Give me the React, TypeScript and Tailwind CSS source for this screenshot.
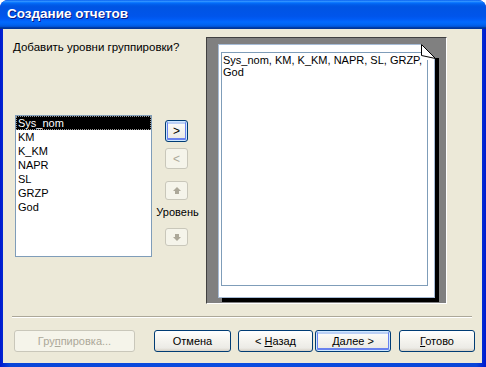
import React from "react";

const font = "font-['Liberation_Sans','Arial',sans-serif]";

function Btn({
  children,
  w,
  variant = "normal",
  className = "",
}: {
  children: React.ReactNode;
  w: string;
  variant?: "normal" | "default" | "disabled";
  className?: string;
}) {
  const base =
    "h-[22px] rounded-[3px] border flex items-center justify-center text-[11px] leading-none shrink-0";
  const v =
    variant === "disabled"
      ? "border-[#c9c7ba] bg-[#f5f4ea] text-[#aca899]"
      : variant === "default"
      ? "border-[#003c74] text-black bg-[linear-gradient(180deg,#ffffff_0%,#f6f5f0_40%,#ecebe6_85%,#d6d0c5_100%)] shadow-[inset_0_0_0_1px_#cee7ff,inset_0_-1px_0_2px_#6982ee,inset_0_1px_0_2px_#bbd0f5]"
      : "border-[#003c74] text-black bg-[linear-gradient(180deg,#ffffff_0%,#f6f5f0_40%,#ecebe6_85%,#d6d0c5_100%)]";
  return <div className={`${base} ${v} ${w} ${className}`}>{children}</div>;
}

function SmallBtn({
  children,
  disabled,
  h,
  mt,
}: {
  children: React.ReactNode;
  disabled?: boolean;
  h: string;
  mt: string;
}) {
  return (
    <div
      className={`w-[23px] ${h} ${mt} rounded-[3px] border flex items-center justify-center text-[12px] leading-none ${
        disabled
          ? "border-[#c9c7ba] bg-[#f5f4ea] text-[#aca899]"
          : "border-[#003c74] text-black bg-[linear-gradient(180deg,#ffffff_0%,#f6f5f0_40%,#ecebe6_85%,#d6d0c5_100%)] shadow-[inset_0_0_0_1px_#cee7ff,inset_0_-1px_0_2px_#6982ee,inset_0_1px_0_2px_#bbd0f5]"
      }`}
    >
      {children}
    </div>
  );
}

export default function App() {
  const items = ["Sys_nom", "KM", "K_KM", "NAPR", "SL", "GRZP", "God"];
  return (
    <div className={`w-[486px] h-[367px] bg-white ${font}`}>
      <div className="flex flex-col w-full h-full rounded-t-[8px] overflow-hidden bg-[linear-gradient(90deg,#0019cf_0%,#0845d8_2%,#0a4ce0_50%,#0845d8_98%,#0019cf_100%)]">
        {/* Title bar */}
        <div className="h-[29px] shrink-0 flex items-center pl-[7px] pb-[1px] bg-[linear-gradient(180deg,#0058ee_0%,#3593ff_4%,#288eff_6%,#127dff_8%,#036ffc_10%,#0262ee_14%,#0057e5_20%,#0054e3_24%,#0055eb_56%,#005bf5_66%,#026afe_76%,#0062ef_86%,#0052d6_92%,#0040ab_94%,#003092_100%)]">
          <span className="text-white font-bold text-[13.5px] leading-none [text-shadow:1px_1px_#0a1883]">
            Создание отчетов
          </span>
        </div>

        {/* Body */}
        <div className="flex-1 ml-[3px] mr-[4px] mb-[4px] bg-[#ece9d8] flex flex-col text-black text-[11px]">
          <div className="flex pt-[8px] pl-[10px]">
            {/* Left column */}
            <div className="w-[193px] flex flex-col">
              <div className="mt-[3px] h-[14px] leading-[14px] text-[11.5px]">
                Добавить уровни группировки?
              </div>
              <div className="flex mt-[61px]">
                <div className="ml-[2px] w-[137px] h-[142px] border border-[#7f9db9] bg-white flex flex-col">
                  {items.map((it, i) => (
                    <div
                      key={it}
                      className={`h-[14px] leading-[14px] pl-[2px] ${
                        i === 0
                          ? "bg-black text-white outline outline-1 outline-dotted outline-[#9a9a9a] -outline-offset-1"
                          : ""
                      }`}
                    >
                      {it}
                    </div>
                  ))}
                </div>
                <div className="ml-[3px] w-[43px] flex flex-col items-center">
                  <SmallBtn h="h-[22px]" mt="mt-[5px]">
                    &gt;
                  </SmallBtn>
                  <SmallBtn h="h-[21px]" mt="mt-[6px]" disabled>
                    &lt;
                  </SmallBtn>
                  <SmallBtn h="h-[19px]" mt="mt-[12px]" disabled>
                    <svg width="8" height="7" viewBox="0 0 8 7">
                      <polygon points="4,0 8,4 6,4 6,7 2,7 2,4 0,4" fill="#aca899" />
                    </svg>
                  </SmallBtn>
                  <div className="mt-[5px] h-[14px] leading-[14px] pl-[2px]">Уровень</div>
                  <SmallBtn h="h-[18px]" mt="mt-[9px]" disabled>
                    <svg width="8" height="7" viewBox="0 0 8 7">
                      <polygon points="2,0 6,0 6,3 8,3 4,7 0,3 2,3" fill="#aca899" />
                    </svg>
                  </SmallBtn>
                </div>
              </div>
            </div>

            {/* Preview frame */}
            <div className="w-[241px] h-[267px] border-l border-t border-[#404040] border-r-white border-b-white border-r border-b bg-[#808080] pl-[11px] pt-[6px]">
              <div className="relative w-[217px] h-[254px] bg-white border border-[#a7bcd6] shadow-[4px_4px_0_#000]">
                <div className="ml-[2px] mt-[7px] w-[207px] h-[234px] border border-[#7f9db9] px-[1px] pt-[1px] leading-[12px] text-[11px]">
                  Sys_nom, KM, K_KM, NAPR, SL, GRZP, God
                </div>
                <svg
                  className="absolute left-[202px] top-[-1px]"
                  width="19"
                  height="16"
                  viewBox="0 0 19 16"
                >
                  <rect x="0" y="0" width="19" height="14" fill="#808080" />
                  <polygon points="0,0 13,13 13,16 0,16" fill="#ffffff" />
                  <rect x="14" y="14" width="4" height="2" fill="#000" />
                  <polygon
                    points="0.5,0.5 0.5,11.5 14.5,14.5"
                    fill="#ffffff"
                    stroke="#000"
                    strokeWidth="1"
                    strokeLinejoin="miter"
                  />
                </svg>
              </div>
            </div>
          </div>

          {/* Separator */}
          <div className="mt-[12px] ml-[9px] mr-[10px] h-[2px] border-t border-[#aca899] border-b border-b-white" />

          {/* Buttons */}
          <div className="flex mt-[12px] pl-[11px]">
            <Btn w="w-[121px]" variant="disabled">
              <span>
                Гру<u className="underline-offset-1">п</u>пировка...
              </span>
            </Btn>
            <Btn w="w-[77px]" className="ml-[19px]">
              Отмена
            </Btn>
            <Btn w="w-[75px]" className="ml-[7px]">
              <span>
                &lt; <u className="underline-offset-1">Н</u>азад
              </span>
            </Btn>
            <Btn w="w-[76px]" className="ml-[2px]" variant="default">
              <span>
                <u className="underline-offset-1">Д</u>алее &gt;
              </span>
            </Btn>
            <Btn w="w-[76px]" className="ml-[8px]">
              <span>
                <u className="underline-offset-1">Г</u>отово
              </span>
            </Btn>
          </div>
        </div>
      </div>
    </div>
  );
}
